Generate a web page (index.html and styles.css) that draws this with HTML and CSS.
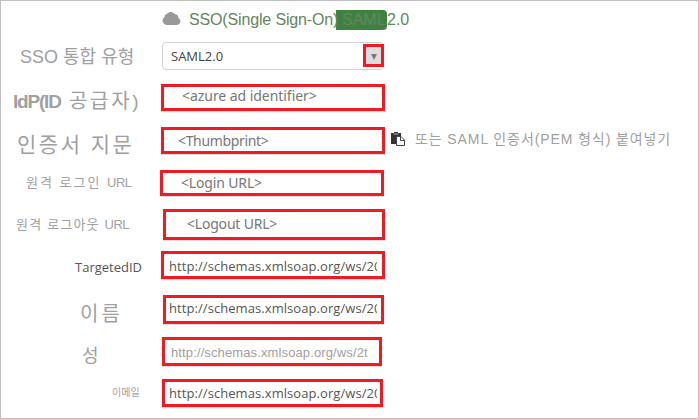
FILE: index.html
```html
<!DOCTYPE html>
<html lang="ko">
<head>
<meta charset="utf-8">
<title>SSO</title>
<link rel="stylesheet" href="styles.css">
</head>
<body>
<main class="panel">
  <header class="heading">
    <svg class="cloud" viewBox="0 0 19 14"><path d="M4.500 14A4.300 4.300 0 0 1 2.400 6.200 4 4 0 0 1 5 2.700 5.300 5.300 0 0 1 13.200 3.300 3.200 3.200 0 0 1 16.300 7 3.700 3.700 0 0 1 15 14Z"/></svg>
    <h1 class="title"><span class="t1">SSO(Single Sign-On)</span><span class="badge">SAML</span><span>2.0</span></h1>
  </header>
  <div class="row type">
    <label class="label">SSO 통합 유형</label>
    <div class="select"><span>SAML2.0</span><span class="arrow"><svg viewBox="0 0 6 6"><path d="M0 0H6L3 6Z"/></svg></span></div>
  </div>
  <div class="row idp">
    <label class="label"><b>IdP(ID</b> <span class="wide">공급자</span>)</label>
    <div class="field hint">&lt;azure ad identifier&gt;</div>
  </div>
  <div class="row thumb">
    <label class="label">인증서 지문</label>
    <div class="field hint">&lt;Thumbprint&gt;</div>
    <svg class="paste" viewBox="0 0 14 15"><path class="dark" d="M0 1H3V0H7V1H10V4H6V12H0Z"/><path class="light" d="M2.500 1.500H7.500V2.500H2.500Z"/><path class="sheet" d="M5.500 4.500H10L13.500 8V13.500H5.500Z"/><path class="fold" d="M9.500 4.500V8.500H13.500"/></svg>
    <span class="note">또는 SAML 인증서(PEM 형식) 붙여넣기</span>
  </div>
  <div class="row login">
    <label class="label">원격 로그인 <span class="url">URL</span></label>
    <div class="field hint">&lt;Login URL&gt;</div>
  </div>
  <div class="row logout">
    <label class="label">원격 로그아웃 <span class="url">URL</span></label>
    <div class="field hint">&lt;Logout URL&gt;</div>
  </div>
  <div class="row target">
    <label class="label">TargetedID</label>
    <div class="field"><span class="clip">http://schemas.xmlsoap.org/ws/20</span></div>
  </div>
  <div class="row first">
    <label class="label">이름</label>
    <div class="field"><span class="clip">http://schemas.xmlsoap.org/ws/20</span></div>
  </div>
  <div class="row last">
    <label class="label">성</label>
    <div class="field">http://schemas.xmlsoap.org/ws/2t</div>
  </div>
  <div class="row email">
    <label class="label">이메일</label>
    <div class="field"><span class="clip">http://schemas.xmlsoap.org/ws/20</span></div>
  </div>
</main>
</body>
</html>
```
FILE: styles.css
```css
* { box-sizing: border-box; }
body { margin: 0; background: #fff; }
.panel {
  width: 699px;
  height: 419px;
  border: 1px solid #c0c0c0;
  overflow: hidden;
  font-family: "Liberation Sans", "Noto Sans CJK KR", sans-serif;
  color: #a0a0a0;
}
.heading { display: flex; height: 41px; padding: 9px 0 0 161px; }
.cloud { width: 19px; height: 14px; margin-top: 1px; fill: #999; }
.title {
  display: flex;
  margin: 0 0 0 8px;
  height: 20px;
  font-size: 16px;
  line-height: 19px;
  font-weight: 400;
  color: #638563;
}
.t1 { position: relative; z-index: 1; width: 147px; white-space: nowrap; letter-spacing: -0.15px; }
.badge { width: 51px; padding-left: 6px; background: #3f8240; border-radius: 0 4px 4px 0; }
.row { display: flex; align-items: flex-start; height: 43px; }
.label { flex: none; width: 160px; white-space: nowrap; line-height: 28px; }
.select {
  display: flex;
  justify-content: space-between;
  width: 222px;
  height: 28px;
  margin-left: 1px;
  padding-left: 8px;
  border: 1px solid #d3d3d3;
  border-radius: 4px;
  font: 13px/27px "Open Sans", sans-serif;
  color: #444;
}
.arrow {
  display: flex;
  align-items: center;
  justify-content: center;
  width: 21px;
  height: 23px;
  margin: 1px -1px 0 0;
  border: 3px solid #ed1c24;
  background: #ddd;
}
.arrow svg { width: 6px; height: 6px; margin-top: 2px; fill: #777; }
.field {
  flex: none;
  width: 224px;
  height: 28px;
  padding: 0 5px;
  border: 3px solid #ed1c24;
  box-shadow: 0 1px 1px #ddd;
  overflow: hidden;
  white-space: nowrap;
  font: 13px/24px "Open Sans", sans-serif;
  color: #555;
}
.clip { display: block; width: 208px; overflow: hidden; letter-spacing: 0.07px; }
.hint { font: 14px/18px "Noto Sans", sans-serif; color: #777; }
.type .label { padding-left: 19px; font-size: 18px; line-height: 31px; }
.type { height: 42px; }
.idp .label { padding-left: 12px; font-size: 19px; line-height: 34px; }
.idp b { letter-spacing: -1.2px; }
.wide { margin-left: 3px; font-size: 20px; letter-spacing: 2.7px; }
.idp .field { height: 27px; padding-left: 18px; line-height: 17px; letter-spacing: -0.05px; }
.thumb .label { padding-left: 16px; font-size: 21px; line-height: 35px; letter-spacing: 2.5px; }
.thumb .field { height: 27px; padding-left: 14px; line-height: 22px; letter-spacing: -0.35px; }
.paste { width: 14px; height: 15px; margin: 5px 0 0 6px; }
.dark { fill: #333; }
.light { fill: #bbb; }
.sheet { fill: #fff; stroke: #444; }
.fold { fill: none; stroke: #444; }
.note { margin-left: 10px; font-size: 14px; line-height: 24px; letter-spacing: 0.9px; white-space: nowrap; }
.login { height: 39px; }
.login .label { width: 159px; padding-left: 25px; font-size: 13px; line-height: 26px; letter-spacing: 2px; }
.url { letter-spacing: -0.5px; }
.login .field { height: 26px; padding-left: 18px; line-height: 20px; letter-spacing: -0.15px; }
.logout { height: 42px; }
.logout .label { width: 162px; padding-left: 15px; font-size: 13px; line-height: 31px; letter-spacing: 1.2px; }
.logout .field { width: 222px; height: 31px; padding-left: 21px; line-height: 23px; letter-spacing: -0.2px; }
.target { height: 44px; }
.target .label { padding-left: 74px; font: 13px/32px "Open Sans", sans-serif; color: #555; }
.first { height: 42px; }
.first .label { width: 162px; padding-left: 79px; font-size: 20px; line-height: 38px; letter-spacing: 3px; }
.first .field { width: 221px; height: 29px; padding-left: 3px; line-height: 21px; }
.last { height: 42px; }
.last .label { width: 161px; padding-left: 81px; font-size: 18px; line-height: 38px; }
.last .field { width: 220px; height: 29px; padding-left: 6px; font: 13px/25px "Liberation Sans", sans-serif; letter-spacing: 0.12px; color: #a0a0a0; }
.email { height: 36px; }
.email .label { width: 161px; padding-left: 111px; font-size: 10px; line-height: 27px; }
.email .field { width: 221px; padding-left: 4px; line-height: 22px; }
```
